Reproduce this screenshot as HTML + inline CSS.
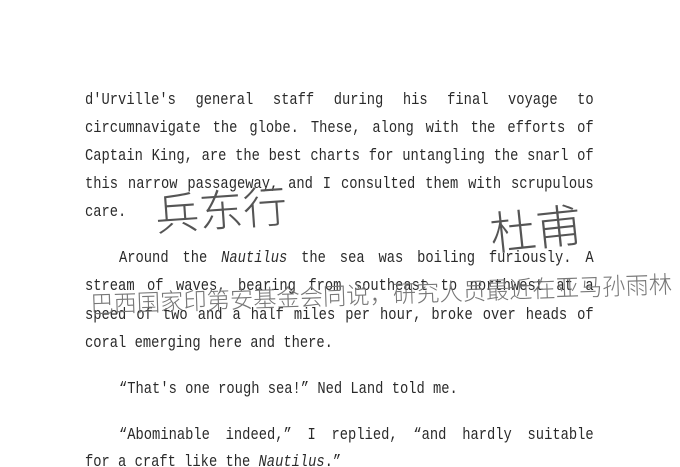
<!DOCTYPE html>
<html><head><meta charset="utf-8"><style>
html,body{margin:0;padding:0;background:#fff;width:680px;height:467px;overflow:hidden;position:relative}
.l{position:absolute;left:85px;width:628px;font-family:"Liberation Mono","Noto Serif CJK SC",monospace;font-size:17px;letter-spacing:0;color:#2a2a2a;white-space:nowrap;line-height:20px;transform:scaleX(0.81);transform-origin:0 0}
.j{text-align:justify;text-align-last:justify;white-space:normal}
i{font-family:"Liberation Mono",monospace;font-style:italic}
svg{position:absolute;left:0;top:0}
</style></head><body>
<div class="l j" style="top:91px">d'Urville's general staff during his final voyage to</div>
<div class="l j" style="top:119px">circumnavigate the globe. These, along with the efforts of</div>
<div class="l j" style="top:147px">Captain King, are the best charts for untangling the snarl of</div>
<div class="l j" style="top:175px">this narrow passageway, and I consulted them with scrupulous</div>
<div class="l" style="top:203px">care.</div>
<div class="l j" style="top:249px;left:119px;width:586px">Around the <i>Nautilus</i> the sea was boiling furiously. A</div>
<div class="l j" style="top:277px">stream of waves, bearing from southeast to northwest at a</div>
<div class="l j" style="top:306px">speed of two and a half miles per hour, broke over heads of</div>
<div class="l" style="top:334px">coral emerging here and there.</div>
<div class="l" style="top:380px;left:119px">“That's one rough sea!” Ned Land told me.</div>
<div class="l j" style="top:426px;left:119px;width:586px">“Abominable indeed,” I replied, “and hardly suitable</div>
<div class="l" style="top:453px">for a craft like the <i>Nautilus</i>.”</div>
<svg width="680" height="467">
<g font-family="'Noto Sans CJK SC',sans-serif" font-weight="200">
<text x="155" y="226" font-size="44" fill="#555" transform="rotate(-4 225 210)">兵东行</text>
<text x="490" y="246" font-size="46" fill="#555" transform="rotate(-6 535 230)">杜甫</text>
<text x="90" y="303" font-size="24" textLength="582" lengthAdjust="spacingAndGlyphs" transform="rotate(-2 380 290)" fill="#777">巴西国家印第安基金会同说，研究人员最近在亚马孙雨林</text>
</g>
</svg>
</body></html>
